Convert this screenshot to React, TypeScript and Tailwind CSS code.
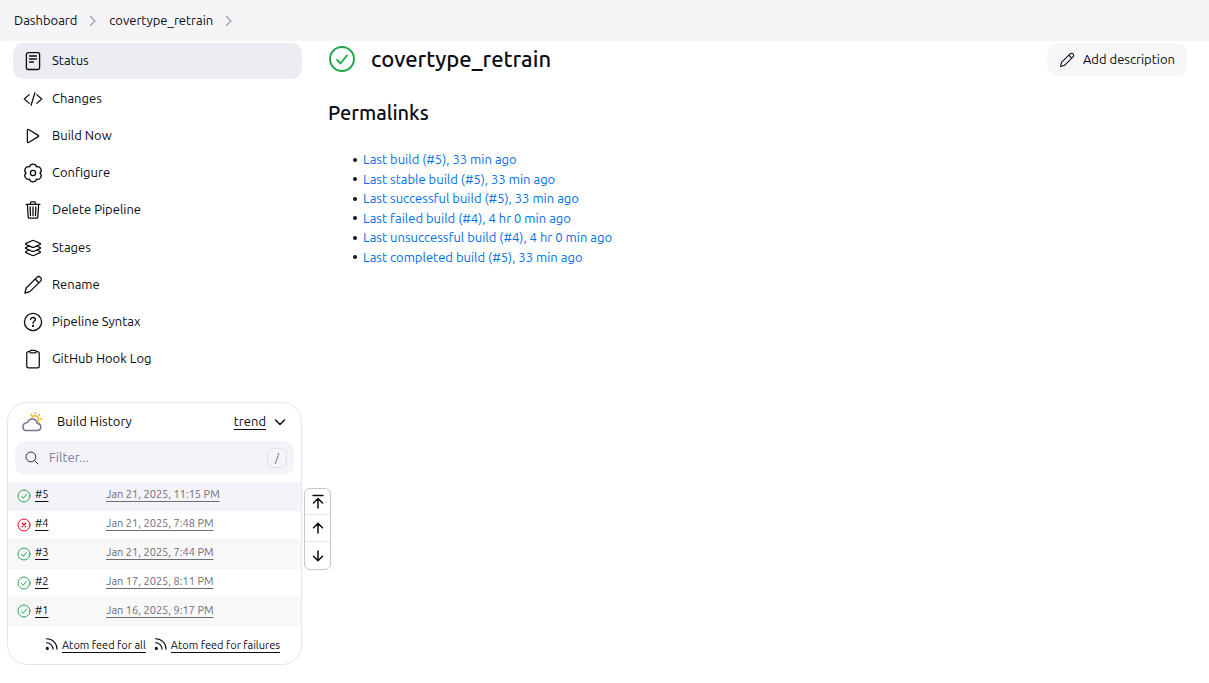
import type { ReactNode } from 'react';
import {
  IoClipboardOutline,
  IoCodeSlashOutline,
  IoLayersOutline,
  IoPlayOutline,
  IoSearchOutline,
  IoTrashOutline,
} from 'react-icons/io5';

function ChevronRight() {
  return (
    <svg viewBox="0 0 12 12" className="size-3 text-[#a3a3b5]" fill="none" stroke="currentColor" strokeWidth="1.4" strokeLinecap="round" strokeLinejoin="round" aria-hidden="true">
      <path d="M3.500 1.500 8 6l-4.500 4.500" />
    </svg>
  );
}

function StatusIcon() {
  return (
    <svg viewBox="0 0 20 20" className="size-5" fill="none" stroke="currentColor" strokeWidth="1.3" strokeLinecap="round" aria-hidden="true">
      <rect x="3.4" y="1.7" width="13.2" height="16.8" rx="1.8" />
      <path d="M6.5 5h7M6.5 8h7M6.5 11h4" />
    </svg>
  );
}

function GearIcon() {
  return (
    <svg viewBox="0 0 20 20" className="size-5" fill="none" stroke="currentColor" strokeWidth="1.3" strokeLinejoin="round" aria-hidden="true">
      <path d="M6.500 3.900A3.600 3.600 0 0 1 13.500 3.900 3.600 3.600 0 0 1 17 10 3.600 3.600 0 0 1 13.500 16.100 3.600 3.600 0 0 1 6.500 16.100 3.600 3.600 0 0 1 3 10 3.600 3.600 0 0 1 6.500 3.900Z" />
      <circle cx="10" cy="10" r="2.6" />
    </svg>
  );
}

function PencilIcon({ className = 'size-5' }: { className?: string }) {
  return (
    <svg viewBox="0 0 20 20" className={className} fill="none" stroke="currentColor" strokeWidth="1.3" strokeLinejoin="round" strokeLinecap="round" aria-hidden="true">
      <path d="M1.900 18.100 3.200 13 13.800 2.400c1-1 2.700-1 3.700 0s1 2.700 0 3.700L6.900 16.600l-5 1.500ZM12.200 4l3.700 3.700" />
    </svg>
  );
}

function HelpIcon() {
  return (
    <svg viewBox="0 0 20 20" className="size-5" fill="none" stroke="currentColor" strokeWidth="1.3" strokeLinecap="round" strokeLinejoin="round" aria-hidden="true">
      <circle cx="10" cy="10" r="8.600" />
      <path d="M7.600 7.600c0-1.300 1.100-2.100 2.400-2.100s2.400.9 2.400 2.100c0 1.700-2.400 1.800-2.400 3.700" />
      <circle cx="10" cy="13.900" r=".5" fill="currentColor" />
    </svg>
  );
}

function ResultIcon({ ok, className }: { ok: boolean; className: string }) {
  return (
    <svg viewBox="0 0 28 28" className={`${className} ${ok ? 'text-[#1ea64b]' : 'text-[#e6001f]'}`} fill="none" stroke="currentColor" strokeWidth="1.900" strokeLinecap="round" strokeLinejoin="round" role="img" aria-label={ok ? 'Success' : 'Failed'}>
      <circle cx="14" cy="14" r="12" />
      {ok ? <path d="m9.200 14.800 3.200 3.700 6.600-8" /> : <path d="m10.500 10.500 7 7M17.500 10.500l-7 7" strokeWidth="2.400" />}
    </svg>
  );
}

function WeatherIcon() {
  return (
    <svg viewBox="0 0 24 24" className="size-6" fill="none" strokeLinecap="round" strokeLinejoin="round" aria-hidden="true">
      <g stroke="#fcaf17" strokeWidth="1.500">
        <path d="M11.800 7.800a3.600 3.600 0 1 1 6.200 3.600" />
        <path d="M15.300 2.600v1M11 4.500l.7.700M19.600 4.500l-.7.700M21.600 8.900h-1M19.600 13.200l-.5-.5" />
      </g>
      <path d="M5.600 20.500h11.200c2.400 0 4-1.500 4-3.500 0-2.100-1.500-3.300-3.600-3.500-.4-2.600-2.300-4.400-4.900-4.400-2.100 0-3.900 1.200-4.700 3.400-2.600.2-4.600 1.600-4.600 4 0 2.300 1.200 4 2.600 4Z" stroke="#73738c" strokeWidth="1.500" />
    </svg>
  );
}

function FeedIcon() {
  return (
    <svg viewBox="0 0 14 14" className="size-[14px] shrink-0" fill="none" stroke="currentColor" strokeWidth="1.100" strokeLinecap="round" aria-hidden="true">
      <path d="M1.500.7c6 0 10.500 4.500 10.500 10.500M1.500 4.700c3.700 0 6.500 2.800 6.500 6.500" />
      <circle cx="2.300" cy="10.400" r="1" fill="currentColor" />
    </svg>
  );
}

function ArrowIcon({ kind }: { kind: 'top' | 'up' | 'down' }) {
  return (
    <svg viewBox="0 0 16 16" className="size-4" fill="none" stroke="currentColor" strokeWidth="1.500" strokeLinecap="round" strokeLinejoin="round" aria-hidden="true">
      {kind === 'top' && <path d="M3 1.500h10M8 14V5M3.500 9 8 4.500 12.500 9" />}
      {kind === 'up' && <path d="M8 13V3.500M3.500 7.800 8 3.300l4.500 4.500" />}
      {kind === 'down' && <path d="M8 3v9.500M3.500 8.200 8 12.700l4.500-4.500" />}
    </svg>
  );
}

const tasks: { label: string; icon: ReactNode }[] = [
  { label: 'Status', icon: <StatusIcon /> },
  { label: 'Changes', icon: <IoCodeSlashOutline className="size-5" /> },
  { label: 'Build Now', icon: <IoPlayOutline className="size-5" /> },
  { label: 'Configure', icon: <GearIcon /> },
  { label: 'Delete Pipeline', icon: <IoTrashOutline className="size-5" /> },
  { label: 'Stages', icon: <IoLayersOutline className="size-5" /> },
  { label: 'Rename', icon: <PencilIcon /> },
  { label: 'Pipeline Syntax', icon: <HelpIcon /> },
  { label: 'GitHub Hook Log', icon: <IoClipboardOutline className="size-5" /> },
];

const builds = [
  { id: '#5', date: 'Jan 21, 2025, 11:15 PM', ok: true },
  { id: '#4', date: 'Jan 21, 2025, 7:48 PM', ok: false },
  { id: '#3', date: 'Jan 21, 2025, 7:44 PM', ok: true },
  { id: '#2', date: 'Jan 17, 2025, 8:11 PM', ok: true },
  { id: '#1', date: 'Jan 16, 2025, 9:17 PM', ok: true },
];

const permalinks = [
  'Last build (#5), 33 min ago',
  'Last stable build (#5), 33 min ago',
  'Last successful build (#5), 33 min ago',
  'Last failed build (#4), 4 hr 0 min ago',
  'Last unsuccessful build (#4), 4 hr 0 min ago',
  'Last completed build (#5), 33 min ago',
];

function BuildHistory() {
  return (
    <section className="w-[295px] rounded-[20px] border border-[#e6e6ee] bg-white">
      <div className="flex h-[38px] items-center pr-[13px] pl-3">
        <WeatherIcon />
        <h2 className="ml-[13px] flex-1">Build History</h2>
        <a href="#trend" className="underline underline-offset-3">trend</a>
        <button type="button" aria-label="Collapse build history" className="ml-[6px] flex size-4 items-center justify-center">
          <svg viewBox="0 0 12 12" className="size-3" fill="none" stroke="currentColor" strokeWidth="1.500" strokeLinecap="round" strokeLinejoin="round" aria-hidden="true">
            <path d="m1.500 4 4.500 4.500L10.500 4" />
          </svg>
        </button>
      </div>
      <label className="mx-[7px] flex h-[34px] items-center rounded-[10px] bg-[#f3f3f8] pr-[7px] pl-[9px]">
        <IoSearchOutline className="size-4 text-[#33333f]" />
        <input type="text" aria-label="Filter builds" placeholder="Filter..." className="ml-[9px] min-w-0 flex-1 bg-transparent outline-none placeholder:text-[#80809c]" />
        <kbd className="flex h-5 w-5 items-center justify-center rounded-[5px] border border-[#e0e0e9] font-[inherit] text-[11px] text-[#60606f]">/</kbd>
      </label>
      <table className="mt-[7px] w-full border-separate border-spacing-0 text-[11px]">
        <tbody>
          {builds.map((build, i) => (
            <tr key={build.id} className={`h-[29px] last:h-7 ${i === 0 ? 'bg-[#f3f3f8]' : 'odd:bg-[#f8f8f8]'}`}>
              <td className="w-[98px] border-b border-[#f3f3f6] p-0 pb-1 pl-[9px]">
                <div className="flex items-center gap-1">
                  <ResultIcon ok={build.ok} className="mt-[3px] size-[14px]" />
                  <a href={`#build-${5 - i}`} className="leading-4 underline underline-offset-3">{build.id}</a>
                </div>
              </td>
              <td className="border-b border-[#f3f3f6] p-0 pb-[3px]">
                <a href={`#console-${5 - i}`} className="leading-4 text-[#6d6d75] underline underline-offset-3">{build.date}</a>
              </td>
            </tr>
          ))}
        </tbody>
      </table>
      <div className="flex h-[38px] items-center justify-end gap-2 pr-[21px] text-[11px]">
        <a href="#atom-all" className="flex items-center gap-[3px]">
          <FeedIcon />
          <span className="underline underline-offset-3">Atom feed for all</span>
        </a>
        <a href="#atom-failures" className="flex items-center gap-[3px]">
          <FeedIcon />
          <span className="underline underline-offset-3">Atom feed for failures</span>
        </a>
      </div>
    </section>
  );
}

export default function App() {
  return (
    <div className="min-h-screen bg-white font-['Ubuntu','Noto_Sans',sans-serif] text-[13px] leading-normal text-[#0b0b14]">
      <nav aria-label="Breadcrumb" className="flex h-[41px] items-center bg-[#f5f5f8] px-[14px]">
        <ol className="flex items-center gap-[10px]">
          <li><a href="#dashboard">Dashboard</a></li>
          <li><ChevronRight /></li>
          <li><a href="#job">covertype_retrain</a></li>
          <li><ChevronRight /></li>
        </ol>
      </nav>

      <div className="flex items-start">
        <aside className="flex shrink-0 items-end pt-[2px]">
          <div className="pl-[7px]">
            <ul className="ml-[6px] flex flex-col gap-px">
              {tasks.map((task, i) => (
                <li key={task.label} className="nth-[4n+1]:mb-px">
                  <a href={`#task-${i}`} aria-current={i === 0 ? 'page' : undefined} className="flex h-9 items-center gap-[9px] rounded-[10px] pl-[10px] aria-[current]:bg-[#ecedf3]">
                    {task.icon}
                    {task.label}
                  </a>
                </li>
              ))}
            </ul>
            <div className="mt-6">
              <BuildHistory />
            </div>
          </div>
          <div className="mb-[95px] ml-[2px] flex w-[27px] flex-col divide-y divide-[#e6e9ee] rounded-md border border-[#c0cad0] bg-white">
            <button type="button" aria-label="Newest builds" className="flex h-[26px] items-center justify-center"><ArrowIcon kind="top" /></button>
            <button type="button" aria-label="Newer builds" className="flex h-[27px] items-center justify-center"><ArrowIcon kind="up" /></button>
            <button type="button" aria-label="Older builds" className="flex h-[27px] items-center justify-center"><ArrowIcon kind="down" /></button>
          </div>
        </aside>

        <main className="-ml-[3px] min-w-0 flex-1 pt-px pr-[22px]">
          <div className="flex items-center">
            <ResultIcon ok className="size-7" />
            <h1 className="ml-[15px] flex-1 text-[22px] leading-7 font-medium">covertype_retrain</h1>
            <button type="button" className="mt-px flex h-[33px] items-center gap-2 rounded-[10px] bg-[#f7f7fa] px-3">
              <PencilIcon className="size-4" />
              Add description
            </button>
          </div>
          <h2 className="mt-[23px] text-[20px] leading-7 font-medium">Permalinks</h2>
          <ul className="mt-[23px] pl-[25px]">
            {permalinks.map((text, i) => (
              <li key={text} className="flex items-center gap-[6px] before:size-1 before:rounded-full before:bg-[#14141f]">
                <a href={`#permalink-${i}`} className="text-[#006fe6]">{text}</a>
              </li>
            ))}
          </ul>
        </main>
      </div>
    </div>
  );
}
